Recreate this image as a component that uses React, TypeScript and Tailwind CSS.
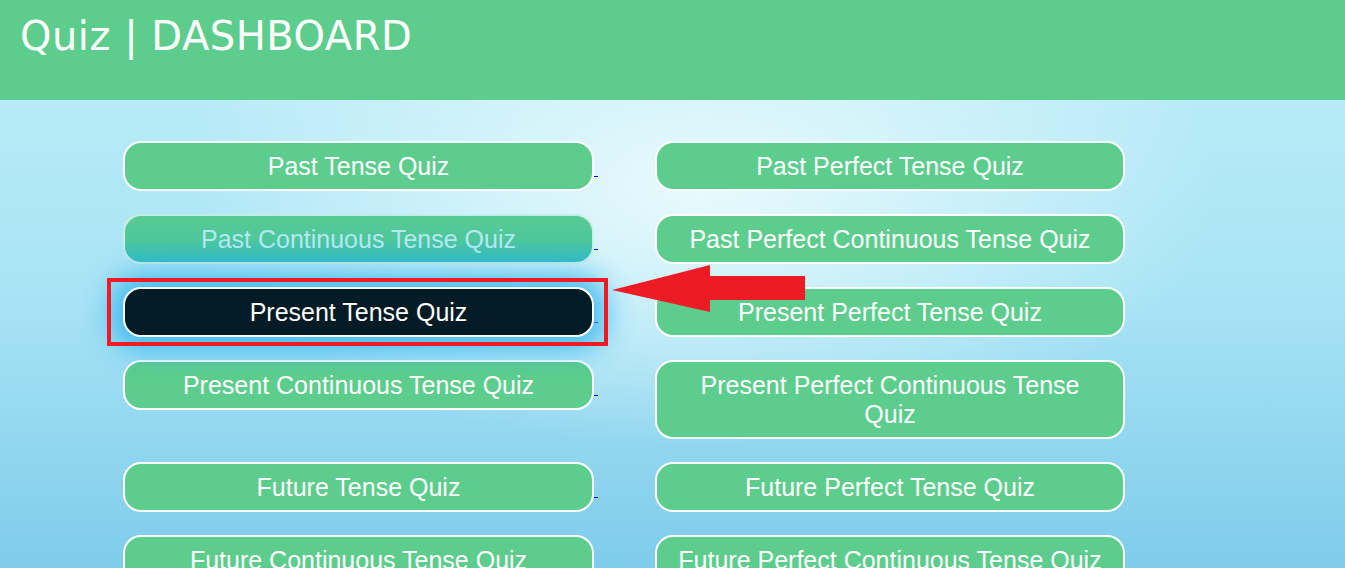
import React from 'react';

type Quiz = { label: string; state?: 'hover' | 'active' };

const leftQuizzes: Quiz[] = [
  { label: 'Past Tense Quiz' },
  { label: 'Past Continuous Tense Quiz', state: 'hover' },
  { label: 'Present Tense Quiz', state: 'active' },
  { label: 'Present Continuous Tense Quiz' },
  { label: 'Future Tense Quiz' },
  { label: 'Future Continuous Tense Quiz' },
];

const rightQuizzes: Quiz[] = [
  { label: 'Past Perfect Tense Quiz' },
  { label: 'Past Perfect Continuous Tense Quiz' },
  { label: 'Present Perfect Tense Quiz' },
  { label: 'Present Perfect Continuous Tense Quiz' },
  { label: 'Future Perfect Tense Quiz' },
  { label: 'Future Perfect Continuous Tense Quiz' },
];

const QuizButton: React.FC<{ quiz: Quiz }> = ({ quiz }) => {
  let look = 'bg-[#5ccd8c] text-white border-white';
  if (quiz.state === 'hover') {
    look = 'bg-gradient-to-b from-[#58cb92] via-[#4fc79c] to-[#30bbc2] text-[#b2e9f2] border-white/70';
  }
  if (quiz.state === 'active') {
    look = 'bg-[#031b24] text-white border-white shadow-[0_0_28px_12px_rgba(52,180,242,0.9)]';
  }
  return (
    <button
      className={`w-full border-2 rounded-[18px] px-[18px] py-[8.5px] text-[25px] leading-[29px] text-center ${look}`}
      style={{ fontFamily: '"Liberation Sans", Arial, sans-serif' }}
    >
      {quiz.label}
    </button>
  );
};

export default function App() {
  return (
    <div className="min-h-screen w-full bg-[radial-gradient(ellipse_520px_260px_at_52%_32%,rgba(236,251,253,0.95),rgba(236,251,253,0)),linear-gradient(to_bottom,#c0eef8,#a8e4f5_50%,#7ccaea)]">
      {/* Header */}
      <header className="h-[100px] bg-[#5ccd8c] pl-[20px] pt-[11px]">
        <h1
          className="text-white text-[40px] leading-[50px] tracking-[0.5px]"
          style={{ fontFamily: '"Comic Sans MS", "DejaVu Sans", sans-serif' }}
        >
          Quiz | DASHBOARD
        </h1>
      </header>

      {/* Quiz grid */}
      <div className="relative pt-[41px] pl-[123px]">
        <div className="grid grid-cols-[475px_470px] gap-x-[57px] gap-y-[23px] items-start">
          {leftQuizzes.map((quiz, i) => (
            <React.Fragment key={quiz.label}>
              <a href="#" className="flex items-end" style={{ gridColumn: 1, gridRow: i + 1 }}>
                <div className={quiz.state === 'active' ? 'relative w-[471px]' : 'w-[471px]'}>
                  <QuizButton quiz={quiz} />
                  {quiz.state === 'active' && (
                    <div className="absolute -left-[16px] -top-[9px] w-[501px] h-[68px] border-[4px] border-[#ed1c24] pointer-events-none" />
                  )}
                </div>
                <span className="w-[4px] h-px bg-[#0000ee] mb-[14px]" />
              </a>
              <a href="#" style={{ gridColumn: 2, gridRow: i + 1 }}>
                <QuizButton quiz={rightQuizzes[i]} />
              </a>
            </React.Fragment>
          ))}
        </div>

        {/* Annotation arrow */}
        <svg className="absolute left-[610px] top-[164px]" width="198" height="50" viewBox="0 0 198 50">
          <polygon points="2,26 100,1 100,12 195,12 195,36 100,36 100,48" fill="#ed1c24" />
        </svg>
      </div>
    </div>
  );
}
